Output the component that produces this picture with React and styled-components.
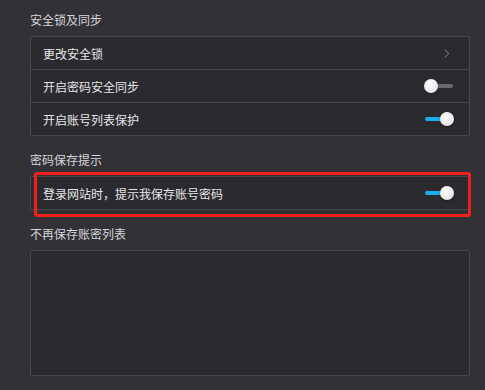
import styled, { createGlobalStyle } from 'styled-components';

const GlobalStyle = createGlobalStyle`
  html, body {
    margin: 0;
    padding: 0;
    background: #323136;
  }
  body {
    font-family: "Noto Sans CJK SC", "Noto Sans", sans-serif;
    color: #e4e4e6;
  }
`;

const Page = styled.div`
  display: flex;
  flex-direction: column;
  gap: 16px;
  width: 485px;
  height: 390px;
  box-sizing: border-box;
  padding: 12px 15px 0 30px;
`;

const Section = styled.section`
  position: relative;
  display: flex;
  flex-direction: column;
  gap: 8px;
`;

const Title = styled.h3`
  margin: 0;
  font-size: 12px;
  font-weight: 400;
  line-height: 16px;
  color: #d6d6d8;
`;

const Panel = styled.div`
  display: flex;
  flex-direction: column;
  background: #2b2b2f;
  border: 1px solid #48474c;
  border-radius: 2px;
  height: ${(p) => (p.$height ? `${p.$height}px` : 'auto')};
  box-sizing: border-box;
`;

const Row = styled.div`
  display: flex;
  align-items: center;
  justify-content: space-between;
  height: 32px;
  padding: 0 16px 0 12px;
  font-size: 12px;
  color: #e6e6e8;

  & + & {
    border-top: 1px solid #48474c;
  }
`;

const Chevron = styled.svg`
  width: 6px;
  height: 9px;
  margin-right: 3px;
`;

const Track = styled.div`
  position: relative;
  width: 28px;
  height: 4px;
  border-radius: 2px;
  background: ${(p) => (p.$on ? 'linear-gradient(90deg, #1ab0f0 0 55%, #6a6b70 55%)' : '#6a6b70')};
`;

const Thumb = styled.div`
  position: absolute;
  top: 50%;
  left: ${(p) => (p.$on ? '15px' : '-1px')};
  width: 14px;
  height: 14px;
  margin-top: -7px;
  border-radius: 50%;
  background: radial-gradient(circle at 40% 35%, #ffffff, #dcdcde);
  box-shadow: 0 1px 2px rgba(0, 0, 0, 0.35);
`;

const Highlight = styled.div`
  position: absolute;
  left: 4px;
  right: -1px;
  top: 20px;
  height: 45px;
  box-sizing: border-box;
  border: 3px solid #f0201c;
  border-radius: 3px;
  pointer-events: none;
`;

function Toggle({ on }) {
  return (
    <Track $on={on}>
      <Thumb $on={on} />
    </Track>
  );
}

function App() {
  return (
    <>
      <GlobalStyle />
      <Page>
        <Section>
          <Title>安全锁及同步</Title>
          <Panel>
            <Row>
              更改安全锁
              <Chevron viewBox="0 0 6 9">
                <path d="M0.8 0.6 L4.8 4.5 L0.8 8.4" fill="none" stroke="#8c8c90" strokeWidth="1" />
              </Chevron>
            </Row>
            <Row>
              开启密码安全同步
              <Toggle on={false} />
            </Row>
            <Row>
              开启账号列表保护
              <Toggle on />
            </Row>
          </Panel>
        </Section>
        <Section>
          <Title>密码保存提示</Title>
          <Panel>
            <Row>
              登录网站时，提示我保存账号密码
              <Toggle on />
            </Row>
          </Panel>
          <Highlight />
        </Section>
        <Section>
          <Title>不再保存账密列表</Title>
          <Panel $height={126} />
        </Section>
      </Page>
    </>
  );
}

export default App;
